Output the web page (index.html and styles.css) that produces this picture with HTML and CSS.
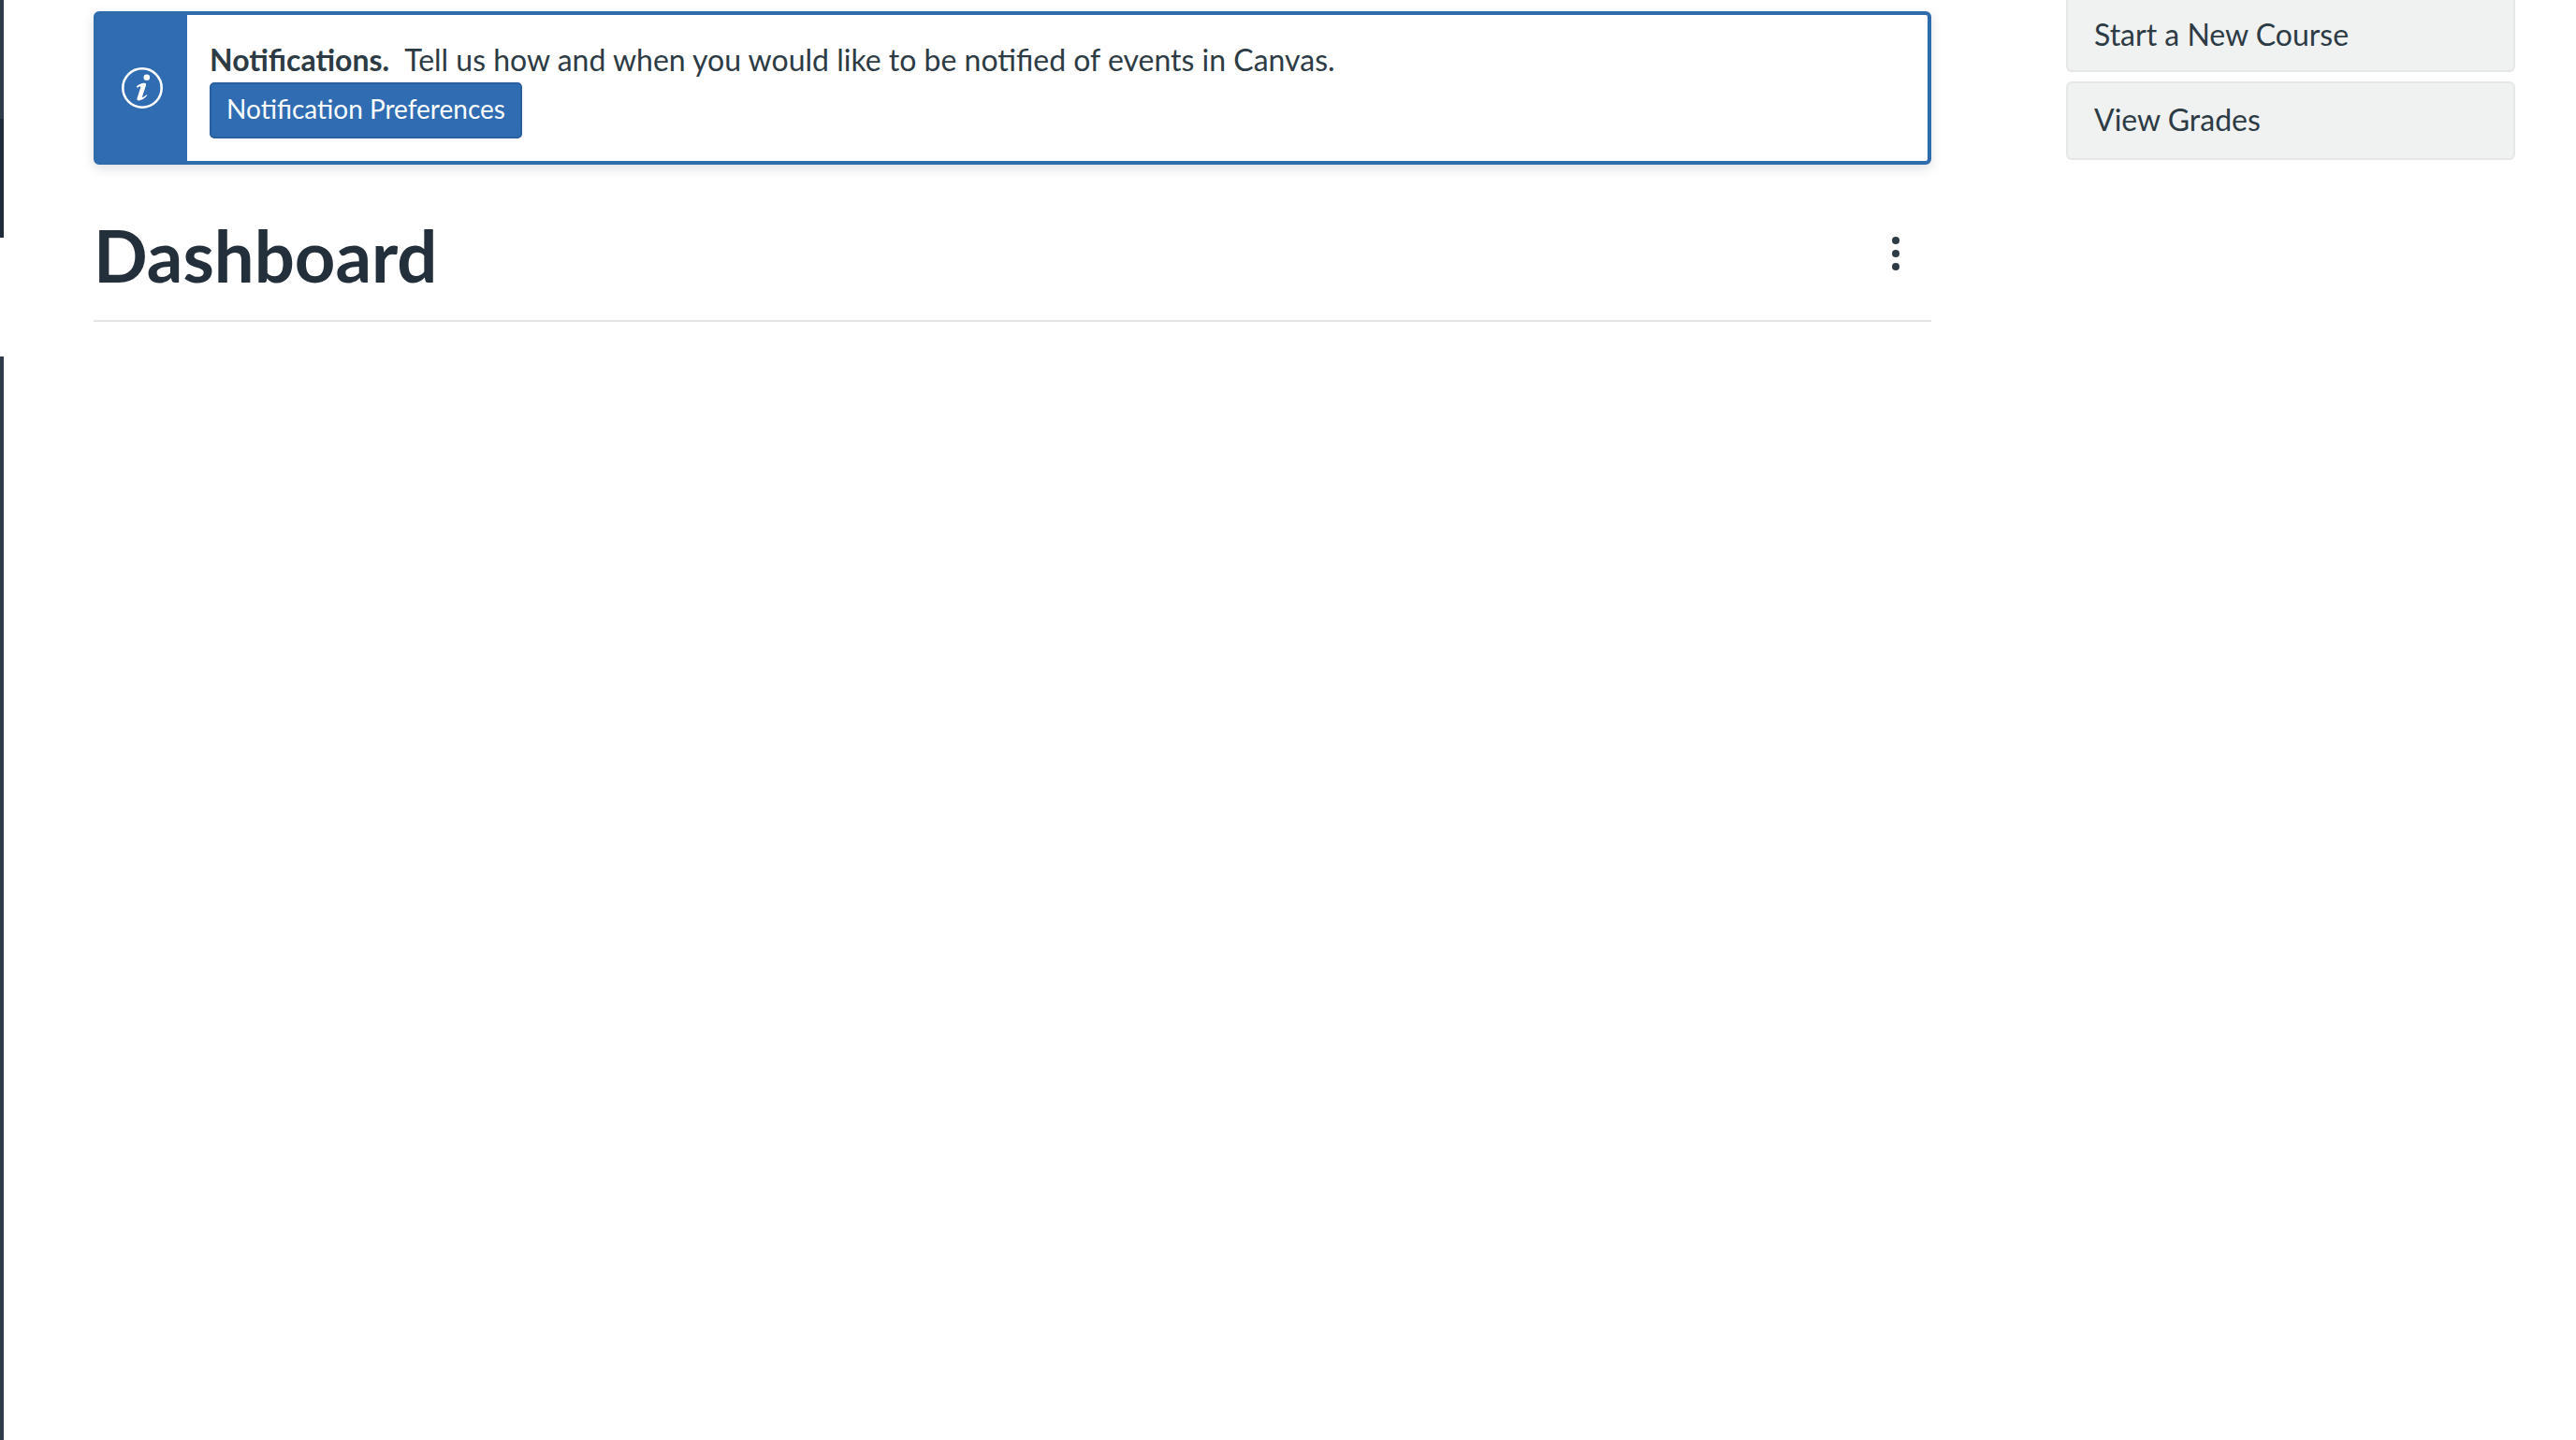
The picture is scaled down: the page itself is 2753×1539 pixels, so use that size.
FILE: index.html
```html
<!DOCTYPE html>
<html lang="en">
<head>
<meta charset="utf-8">
<title>Dashboard</title>
<link rel="stylesheet" href="styles.css">
</head>
<body>
<div class="rail">
  <div class="rail-top"></div>
  <div class="rail-bottom"></div>
</div>
<main class="main">
  <section class="alert">
    <div class="alert-icon">
      <svg class="info" viewBox="0 0 44 44" aria-hidden="true">
        <circle cx="22" cy="22" r="20.7" fill="none" stroke="#fff" stroke-width="2.6"/>
        <circle cx="26.8" cy="10.8" r="3.3" fill="#fff"/>
        <path fill="#fff" d="M15.8 20.2c3-2.5 6-3.7 8.8-3.5 1.4.1 1.9 1 1.4 2.5l-3.9 11.9c-.3.9.3 1.2 1.1.7 1-.6 2.1-1.5 3.2-2.6l.9.9c-2.5 3.1-5.5 5-8.6 5.3-1.9.2-2.7-.8-2.1-2.6l3.6-11.2c.3-1-.2-1.4-1.1-1-.8.3-1.5.8-2.3 1.3z"/>
      </svg>
    </div>
    <div class="alert-body">
      <p class="alert-text"><strong class="alert-title">Notifications.</strong>Tell us how and when you would like to be notified of events in Canvas.</p>
      <button class="pref-btn" type="button">Notification Preferences</button>
    </div>
  </section>
  <header class="page-head">
    <h1 class="page-title">Dashboard</h1>
    <button class="more" type="button" aria-label="Dashboard options">
      <span class="dot"></span><span class="dot"></span><span class="dot"></span>
    </button>
  </header>
</main>
<aside class="side">
  <a class="side-btn side-btn-first">Start a New Course</a>
  <a class="side-btn side-btn-second">View Grades</a>
</aside>
</body>
</html>
```

FILE: styles.css
```css
* { box-sizing: border-box; }
html, body { height: 100%; }
body {
  margin: 0;
  display: flex;
  align-items: flex-start;
  height: 1539px;
  overflow: hidden;
  background: #fff;
  color: #2d3b45;
  font-family: Lato, "Liberation Sans", sans-serif;
  font-feature-settings: "liga", "dlig";
}
.rail {
  flex: 0 0 4px;
  height: 1539px;
  display: flex;
  flex-direction: column;
  gap: 127px;
}
.rail-top { height: 254px; background: linear-gradient(#2d3b4a 50%, #1f2b38 50%); }
.rail-bottom { flex: 1; background: #2d3b4a; }
.main {
  flex: 0 0 1964px;
  margin-left: 96px;
  padding-top: 12px;
}
.alert {
  display: flex;
  height: 164px;
  border: 4px solid #2f6cae;
  border-radius: 6px;
  background: #fff;
  box-shadow: 0 4px 12px rgba(45, 59, 69, 0.16);
}
.alert-icon {
  flex: 0 0 96px;
  display: flex;
  align-items: center;
  justify-content: center;
  background: #2f6cb2;
}
.info { width: 44px; height: 44px; }
.alert-body { padding: 26px 0 0 24px; }
.alert-text {
  margin: 0;
  font-size: 32px;
  line-height: 44px;
}
.alert-title { font-weight: 700; margin-right: 16px; }
.pref-btn {
  display: block;
  width: 334px;
  height: 60px;
  margin-top: 2px;
  padding: 0 0 4px;
  border: 2px solid #2a5f9e;
  border-radius: 5px;
  background: #2f6cb2;
  color: #fff;
  font-family: inherit;
  font-feature-settings: inherit;
  font-size: 28px;
  line-height: 1;
}
.page-head {
  display: flex;
  align-items: center;
  justify-content: space-between;
  height: 168px;
  border-bottom: 2px solid #e2e4e6;
  padding-top: 24px;
}
.page-title {
  margin: 4px 0 0;
  font-size: 76px;
  font-weight: 700;
  line-height: 1;
  color: #232f3b;
}
.more {
  display: flex;
  flex-direction: column;
  gap: 6px;
  margin-right: 34px;
  padding: 0;
  border: 0;
  background: none;
}
.dot {
  width: 8px;
  height: 8px;
  border-radius: 50%;
  background: #2d3b45;
}
.side {
  flex: 0 0 480px;
  margin-left: 144px;
  display: flex;
  flex-direction: column;
  gap: 10px;
}
.side-btn {
  display: flex;
  align-items: center;
  padding-left: 28px;
  background: #f0f1f1;
  border: 2px solid #e6e8e8;
  border-radius: 6px;
  font-size: 32px;
  color: #2d3b45;
}
.side-btn-first {
  height: 77px;
  padding-bottom: 2px;
  border-top: 0;
  border-top-left-radius: 0;
  border-top-right-radius: 0;
}
.side-btn-second { height: 84px; padding-bottom: 4px; }
```
